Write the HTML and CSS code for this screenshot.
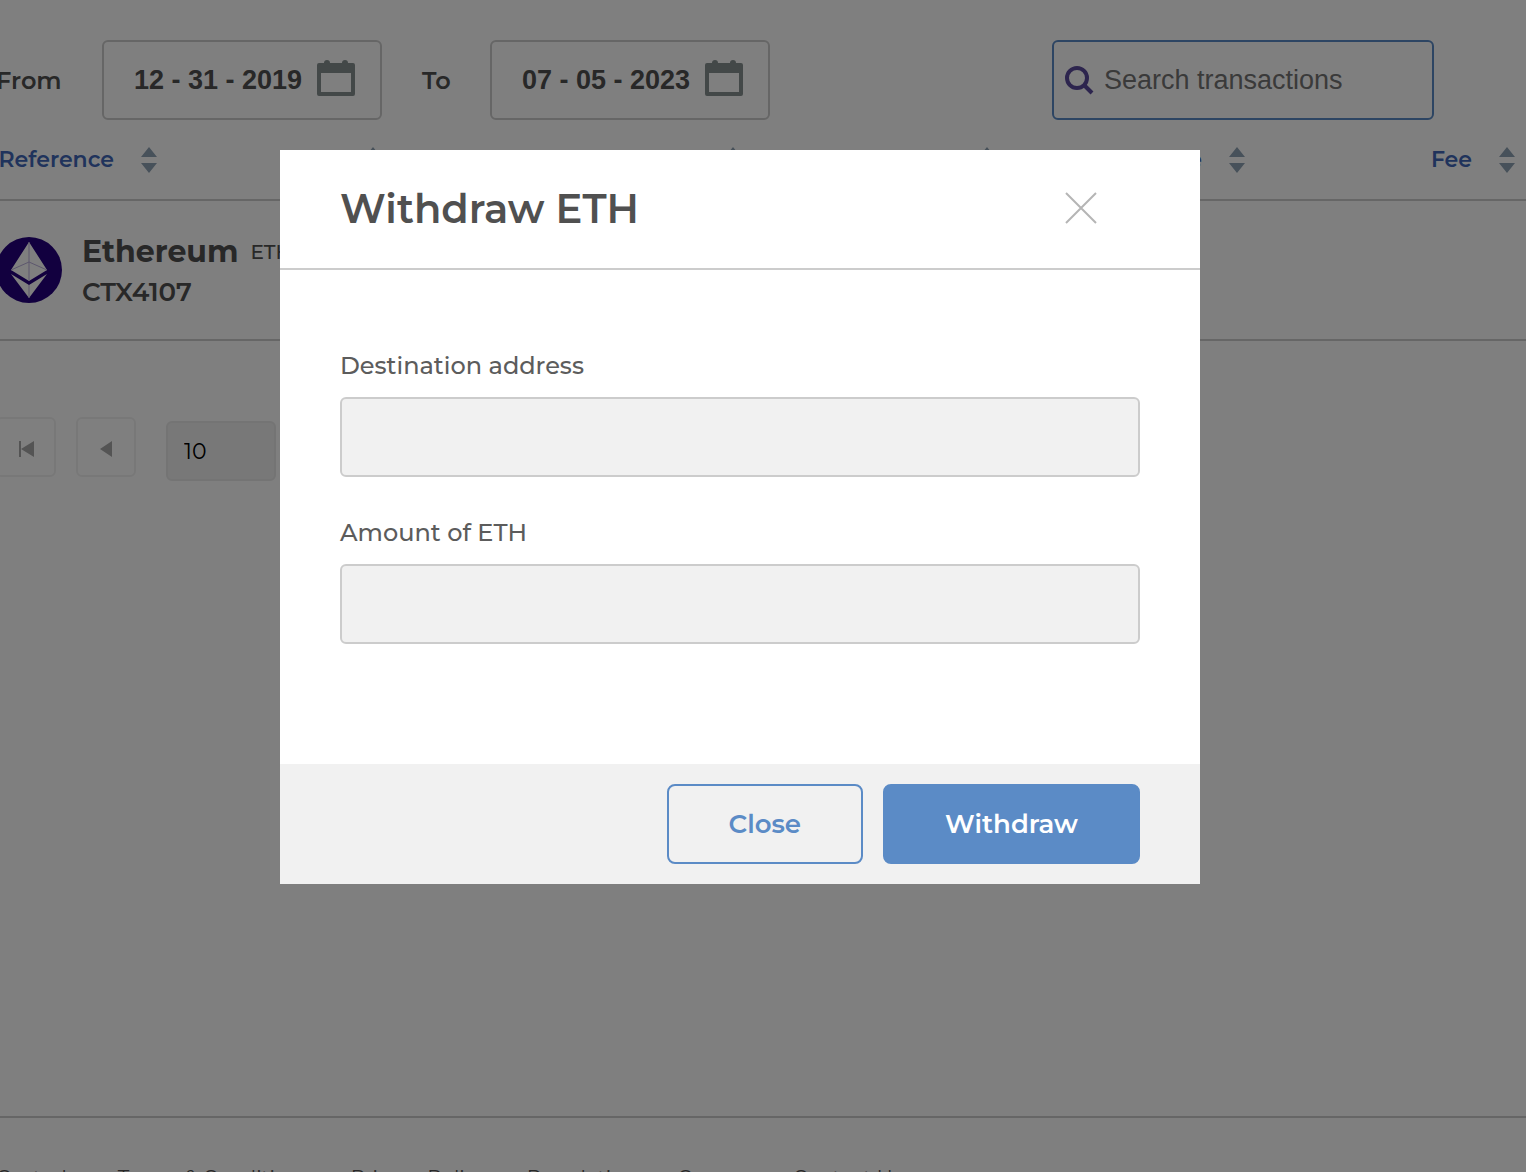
FILE: index.html
```html
<!DOCTYPE html>
<html lang="en">
<head>
    <meta charset="UTF-8">
    <meta name="viewport" content="width=device-width, initial-scale=1.0">
    <title>Withdraw ETH</title>
    <link rel="stylesheet" href="styles.css">
</head>
<body>
    <svg width="0" height="0" class="sprite" aria-hidden="true">
        <symbol id="sort" viewBox="0 0 16 26">
            <path d="M8 0l8 10H0zM0 16h16L8 26z" fill="#8fa2b4"/>
        </symbol>
        <symbol id="calendar" viewBox="0 0 40 38">
            <path fill="#869090" fill-rule="evenodd" d="M3 4h5a3 3 0 0 1 6 0h12a3 3 0 0 1 6 0h5a2 2 0 0 1 2 2v29a2 2 0 0 1-2 2H3a2 2 0 0 1-2-2V6a2 2 0 0 1 2-2zm2 10v19h30V14z"/>
        </symbol>
    </svg>

    <div class="page">
        <main>
            <div class="toolbar">
                <label class="from-label" for="from">From</label>
                <div class="date-box">
                    <input type="text" id="from" value="12 - 31 - 2019">
                    <svg width="40" height="38"><use href="#calendar"/></svg>
                </div>
                <label class="to-label" for="to">To</label>
                <div class="date-box">
                    <input type="text" id="to" value="07 - 05 - 2023">
                    <svg width="40" height="38"><use href="#calendar"/></svg>
                </div>
                <div class="search-box">
                    <svg width="30" height="30" viewBox="0 0 30 30" fill="none" stroke="#5b4a9c" stroke-width="4">
                        <circle cx="13" cy="13" r="10"/>
                        <path d="M20 20l8 8"/>
                    </svg>
                    <input type="search" aria-label="Search transactions" placeholder="Search transactions">
                </div>
            </div>

            <table>
                <colgroup>
                    <col class="col-reference">
                    <col class="col-date">
                    <col class="col-type">
                    <col class="col-amount">
                    <col class="col-value">
                    <col class="col-fee">
                    <col>
                </colgroup>
                <thead>
                    <tr>
                        <th><a href="#">Reference<svg width="16" height="26"><use href="#sort"/></svg></a></th>
                        <th><a href="#">Date<svg width="16" height="26"><use href="#sort"/></svg></a></th>
                        <th><a href="#">Type<svg width="16" height="26"><use href="#sort"/></svg></a></th>
                        <th><a href="#">Amount<svg width="16" height="26"><use href="#sort"/></svg></a></th>
                        <th><a href="#">Value<svg width="16" height="26"><use href="#sort"/></svg></a></th>
                        <th><a href="#">Fee<svg width="16" height="26"><use href="#sort"/></svg></a></th>
                        <th></th>
                    </tr>
                </thead>
                <tbody>
                    <tr>
                        <td colspan="7">
                            <div class="coin">
                                <svg width="66" height="66" viewBox="0 0 66 66">
                                    <circle cx="33" cy="33" r="33" fill="#24007e"/>
                                    <path d="M33 5l18 28-18 11-18-11zM15 37l18 11 18-11-18 24z" fill="#fff"/>
                                    <path d="M33 5v39M33 48v13M15 33l18-8 18 8" fill="none" stroke="#b9aedb"/>
                                </svg>
                                <div>
                                    <p class="coin-name">Ethereum <span>ETH</span></p>
                                    <p class="coin-ref">CTX4107</p>
                                </div>
                            </div>
                        </td>
                    </tr>
                </tbody>
            </table>

            <div class="pager">
                <button type="button" aria-label="First page">
                    <svg width="16" height="16" viewBox="0 0 16 16" fill="#a8a8a8"><path d="M1 0h2v16H1zM16 0v16L3 8z"/></svg>
                </button>
                <button type="button" aria-label="Previous page">
                    <svg width="16" height="16" viewBox="0 0 16 16" fill="#a8a8a8"><path d="M14 0v16L2 8z"/></svg>
                </button>
                <select aria-label="Rows per page">
                    <option>10</option>
                </select>
            </div>
        </main>

        <footer>
            <nav>
                <a href="#">Custody</a>
                <a href="#">Terms &amp; Conditions</a>
                <a href="#">Privacy Policy</a>
                <a href="#">Regulation</a>
                <a href="#">Careers</a>
                <a href="#">Contact Us</a>
            </nav>
        </footer>
    </div>

    <div class="overlay">
        <form class="modal" role="dialog" aria-labelledby="modal-title">
            <div class="modal-header">
                <h1 id="modal-title">Withdraw ETH</h1>
                <button type="button" class="modal-x" aria-label="Close dialog">
                    <svg width="32" height="32" viewBox="0 0 32 32" stroke="#b5b5b5" stroke-width="2"><path d="M1 1l30 30M31 1L1 31"/></svg>
                </button>
            </div>
            <div class="modal-body">
                <label for="address">Destination address</label>
                <input type="text" id="address">
                <label for="amount">Amount of ETH</label>
                <input type="text" id="amount">
            </div>
            <div class="modal-footer">
                <button type="button" class="btn btn-outline">Close</button>
                <button type="submit" class="btn btn-primary">Withdraw</button>
            </div>
        </form>
    </div>
</body>
</html>
```
FILE: styles.css
```css
* {
    box-sizing: border-box;
}
body {
    margin: 0;
    height: 100vh;
    overflow: hidden; /* no scrolling behind the dialog */
    background: #fff;
    color: #505050;
    font-family: Montserrat, Inter, sans-serif;
}
input, select, button {
    font: inherit;
    color: inherit;
}
a {
    color: inherit;
    text-decoration: none;
}
h1, p {
    margin: 0;
}
.sprite {
    position: absolute;
}

/* transactions */
.page {
    margin-left: -4px;
}
main {
    min-height: calc(100vh - 56px);
    padding-top: 40px;
}
.toolbar {
    display: flex;
    align-items: center;
    height: 80px;
    padding-right: 92px;
    font-size: 24px;
    font-weight: 600;
}
.from-label {
    width: 106px;
}
.to-label {
    width: 108px;
    padding-left: 40px;
}
.date-box, .search-box {
    display: flex;
    align-items: center;
    height: 80px;
    border: 2px solid #ccc;
    border-radius: 6px;
}
.date-box {
    width: 280px;
    padding: 0 24px 0 30px;
}
.date-box input, .search-box input {
    flex: 1;
    min-width: 0;
    padding: 0;
    border: none;
    outline: none;
    background: none;
    font-family: "Liberation Sans", Arial, sans-serif;
    font-size: 27px;
}
.date-box input {
    font-weight: 700;
}
.date-box svg {
    flex: none;
    margin-bottom: 4px;
}
.search-box {
    width: 382px;
    margin-left: auto;
    padding: 0 10px;
    gap: 10px;
    border-color: #5b8bc6;
}
.search-box input {
    font-weight: 400;
}
.search-box input::placeholder {
    color: #757575;
}

table {
    width: 100%;
    table-layout: fixed;
    border-collapse: collapse;
}
.col-reference {
    width: 161px;
}
.col-date {
    width: 224px;
}
.col-type {
    width: 360px;
}
.col-amount {
    width: 254px;
}
.col-value {
    width: 250px;
}
.col-fee {
    width: 270px;
}
tr {
    border-bottom: 2px solid #ccc;
}
th {
    height: 80px;
    padding: 0;
    color: #4067b8;
    font-size: 22px;
    font-weight: 600;
}
th a {
    display: flex;
    align-items: center;
    justify-content: flex-end;
    gap: 27px;
}
td {
    height: 140px;
    padding: 0;
}
.coin {
    display: flex;
    align-items: center;
    gap: 20px;
}
.coin-name {
    display: flex;
    align-items: center;
    gap: 12px;
    padding-top: 4px;
    font-size: 30px;
    font-weight: 700;
    line-height: 40px;
}
.coin-name span {
    font-size: 20px;
    font-weight: 500;
}
.coin-ref {
    font-size: 26px;
    font-weight: 600;
    line-height: 40px;
}

.pager {
    display: flex;
    gap: 20px;
    padding-top: 76px;
}
.pager button {
    display: flex;
    align-items: center;
    justify-content: center;
    width: 60px;
    height: 60px;
    padding: 4px 0 0;
    border: 2px solid #f1f1f1;
    border-radius: 6px;
    background: none;
}
.pager select {
    width: 110px;
    height: 60px;
    margin: 4px 0 0 10px;
    padding: 0 16px;
    border: 2px solid #e8e8e8;
    border-radius: 6px;
    background: #f1f1f1;
    color: #000;
    font-size: 22px;
    appearance: none;
}

footer {
    border-top: 2px solid #ccc;
    padding: 48px 0;
}
nav {
    display: flex;
    gap: 40px;
    font-size: 20px;
    line-height: 24px;
    white-space: nowrap;
}

/* dialog */
.overlay {
    position: fixed;
    inset: 0;
    display: flex;
    align-items: flex-start;
    justify-content: center;
    padding: 150px 46px 0 0;
    background: rgba(0, 0, 0, 0.5);
}
.modal {
    width: 920px;
    background: #fff;
}
.modal-header {
    display: flex;
    align-items: center;
    justify-content: space-between;
    height: 120px;
    padding: 0 103px 2px 60px;
    border-bottom: 2px solid #ccc;
}
.modal-header h1 {
    font-size: 40px;
    font-weight: 600;
}
.modal-x {
    display: flex;
    padding: 0;
    border: none;
    background: none;
    cursor: pointer;
}
.modal-body {
    padding: 80px 60px;
}
.modal-body label {
    display: block;
    margin-bottom: 15px;
    color: #5c5c5c;
    font-size: 24px;
    font-weight: 500;
    line-height: 32px;
}
.modal-body input {
    display: block;
    width: 100%;
    height: 80px;
    margin-bottom: 40px;
    padding: 0 20px;
    border: 2px solid #ccc;
    border-radius: 6px;
    background: #f1f1f1;
}
.modal-footer {
    display: flex;
    justify-content: flex-end;
    gap: 20px;
    padding: 20px 60px;
    background: #f1f1f1;
}
.btn {
    height: 80px;
    padding: 0 60px;
    border: 2px solid #5b8bc6;
    border-radius: 8px;
    font-size: 26px;
    font-weight: 600;
    cursor: pointer;
}
.btn-outline {
    background: none;
    color: #5b8bc6;
}
.btn-primary {
    background: #5b8bc6;
    color: #fff;
}
```
